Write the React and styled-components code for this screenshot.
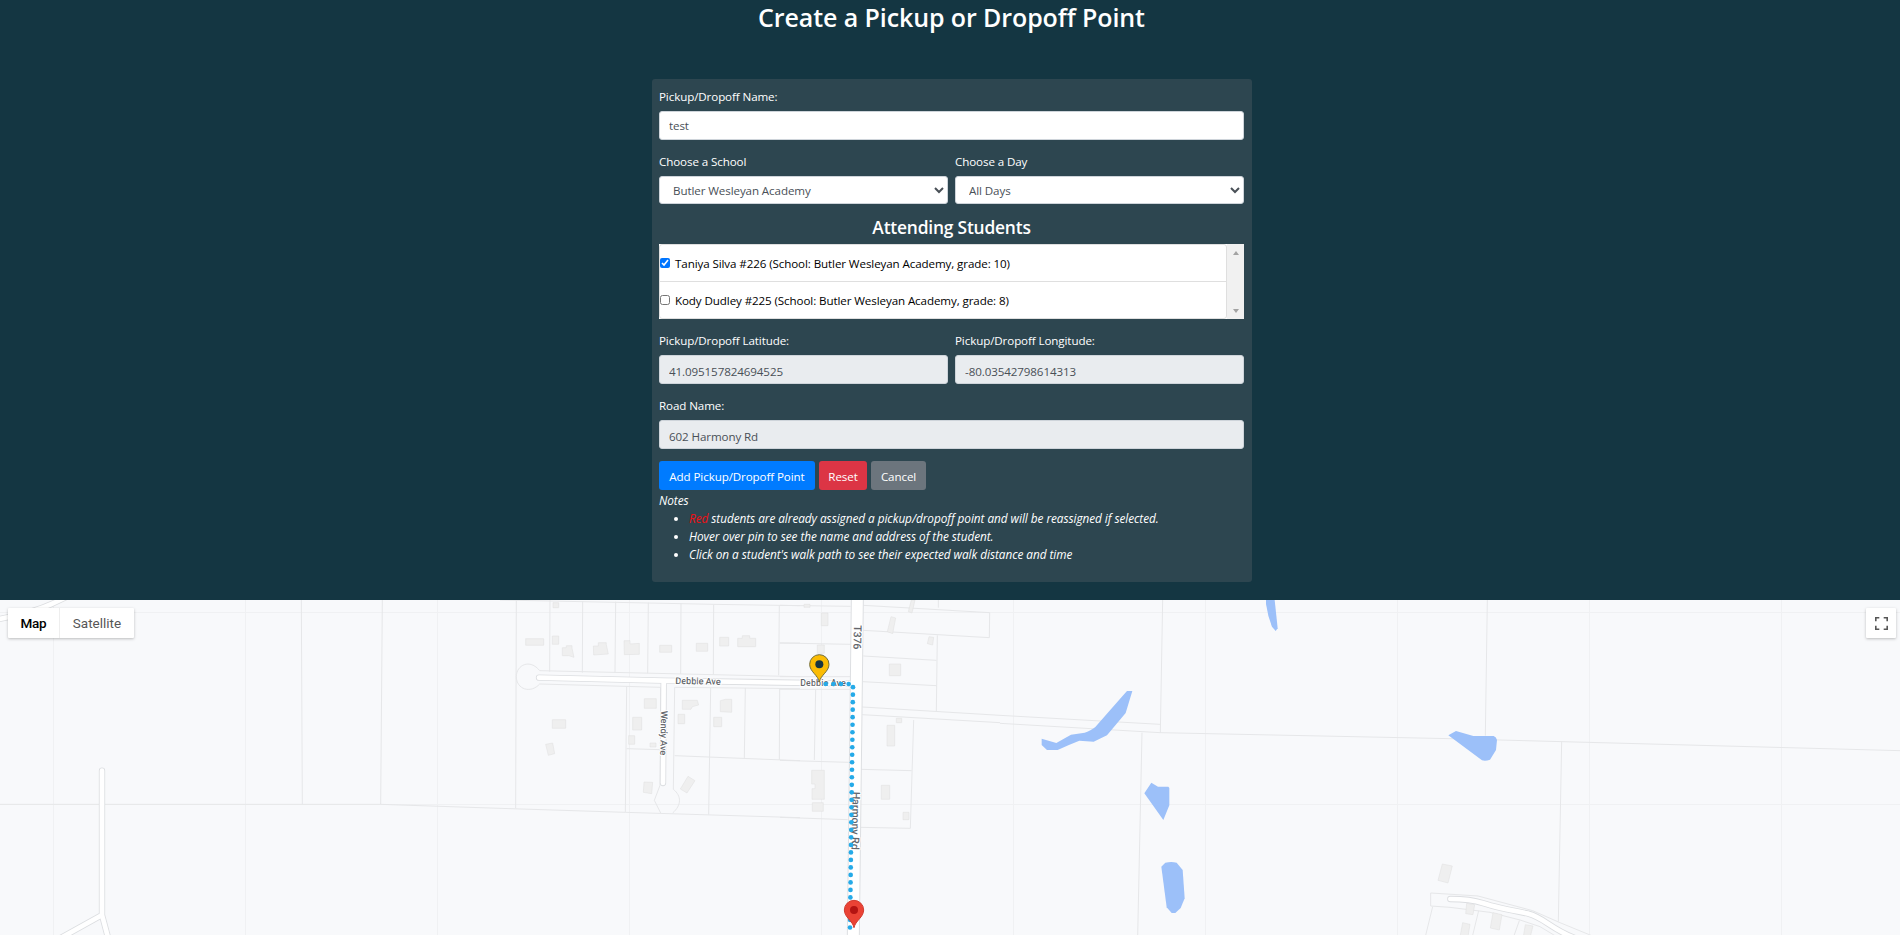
import React from "react";
import styled, { createGlobalStyle, css } from "styled-components";

const GlobalStyle = createGlobalStyle`
  *, *::before, *::after { box-sizing: border-box; }
  html { font-size: 12px; }
  body {
    margin: 0;
    background: #143642;
    color: #fff;
    font-family: "Open Sans", "Noto Sans", sans-serif;
    font-size: 11.6px;
    line-height: 18px;
    letter-spacing: -0.1px;
    overflow: hidden;
  }
`;

const Page = styled.div`
  display: flex;
  flex-direction: column;
  height: 935px;
  overflow: hidden;
`;

const Title = styled.h2`
  margin: 0;
  padding: 3px 0 0 3px;
  height: 79px;
  text-align: center;
  font-size: 25px;
  font-weight: 600;
  line-height: 29px;
  letter-spacing: -0.1px;
`;

const Card = styled.form`
  width: 600px;
  height: 503px;
  margin: 0 0 18px 652px;
  padding: 8px 8px 0 7px;
  border-radius: 3px;
  background: #2d4650;
`;

const Row = styled.div`
  display: grid;
  grid-template-columns: repeat(${(p) => p.$cols || 1}, 1fr);
  column-gap: 7px;
  margin-bottom: 12px;
`;

const Field = styled.label`
  display: flex;
  flex-direction: column;
  gap: 5px;
  padding-top: 1px;
`;

const control = css`
  width: 100%;
  border: 1px solid #ced4da;
  border-radius: 3px;
  background: #fff;
  color: #495057;
  font: inherit;
  letter-spacing: inherit;
  outline: none;
`;

const Input = styled.input`
  ${control}
  height: 29px;
  padding: 4.5px 9px;
  &:read-only { padding: 6px 9px 3px; background: #e9ecef; }
`;

const Select = styled.select`
  ${control}
  height: 28px;
  padding: 4px 9px;
`;

const SubTitle = styled.h4`
  margin: 0 0 6px;
  text-align: center;
  font-size: 17.4px;
  font-weight: 600;
  line-height: 22px;
  letter-spacing: -0.2px;
`;

const ListBox = styled.div`
  display: flex;
  height: 75px;
  margin-bottom: 12px;
  background: #fff;
`;

const StudentList = styled.div`
  flex: 1;
  border: 1px solid #dfdfdf;
  border-radius: 3px;
`;

const Student = styled.label`
  display: flex;
  align-items: center;
  height: 36px;
  padding: 1px 0 0;
  color: #000;
  & + & { height: 37px; border-top: 1px solid #dfdfdf; }
`;

const Check = styled.input`
  width: 10px;
  height: 10px;
  margin: -1px 5px 0 0;
`;

const Track = styled.div`
  display: flex;
  flex-direction: column;
  justify-content: space-between;
  align-items: center;
  width: 17px;
  padding: 7px 0 6px;
  background: #f1f1f1;
`;

const Arrow = styled.span`
  border: 3.5px solid transparent;
  border-top-width: ${(p) => (p.$up ? 0 : 4)}px;
  border-bottom-width: ${(p) => (p.$up ? 4 : 0)}px;
  border-${(p) => (p.$up ? "bottom" : "top")}-color: #a3a3a3;
`;

const Actions = styled.div`
  display: flex;
  gap: 4px;
`;

const Button = styled.button`
  width: ${(p) => p.$width}px;
  height: 29px;
  padding: 2px 0 0;
  border: 0;
  border-radius: 3px;
  background: ${(p) => p.$color};
  color: #fff;
  font: inherit;
  letter-spacing: inherit;
`;

const Notes = styled.div`
  padding-top: 1px;
  font-size: 11.8px;
  font-style: italic;
  letter-spacing: -0.05px;
`;

const NoteList = styled.ul`
  margin: 0;
  padding-left: 30px;
`;

const Red = styled.span`
  color: #f00f14;
`;

const MapArea = styled.div`
  position: relative;
  flex: 0 0 335px;
  background: #f8f9fb;
`;

const MapSvg = styled.svg`
  display: block;
  font-family: Roboto, sans-serif;
  letter-spacing: 0;
`;

const MapTypes = styled.div`
  position: absolute;
  left: 8px;
  top: 8px;
  display: flex;
  height: 30px;
  border-radius: 1px;
  background: #fff;
  box-shadow: 0 1px 3px rgba(0, 0, 0, 0.25);
`;

const MapType = styled.div`
  width: ${(p) => p.$width}px;
  border-left: ${(p) => (p.$active ? 0 : 1)}px solid #eee;
  color: ${(p) => (p.$active ? "#000" : "#565656")};
  font: ${(p) => (p.$active ? 500 : 400)} 13.5px/30px Roboto, sans-serif;
  letter-spacing: ${(p) => (p.$active ? -0.3 : 0)}px;
  text-align: center;
`;

const Fullscreen = styled.div`
  position: absolute;
  right: 4px;
  top: 8px;
  display: grid;
  place-items: center;
  width: 30px;
  height: 30px;
  border-radius: 1px;
  background: #fff;
  box-shadow: 0 1px 3px rgba(0, 0, 0, 0.25);
`;

const Parcel = styled.path`
  fill: none;
  stroke: ${(p) => p.$tone || "#e6e7e9"};
  stroke-width: 1;
  vector-effect: non-scaling-stroke;
`;

const Casing = styled.path`
  fill: none;
  stroke: #dcdee1;
  stroke-width: 19;
  stroke-linecap: round;
  stroke-linejoin: round;
`;

const Street = styled(Casing)`
  stroke: #fff;
  stroke-width: 14;
`;

const Buildings = styled.path`
  fill: #efefef;
  stroke: #dedede;
  stroke-width: 1.5;
`;

const Water = styled.path`
  fill: #9cc0f9;
`;

const StreetName = styled.text`
  fill: #63666b;
  stroke: #fff;
  stroke-width: 6;
  stroke-linejoin: round;
  paint-order: stroke;
  font-size: ${(p) => p.$size || 28}px;
  font-weight: 500;
  text-anchor: middle;
`;

/* Map features are drafted in third-pixel units relative to each sector. */
const Sector = ({ x, children }) => (
  <g transform={`translate(${x} 590) scale(0.333333)`}>{children}</g>
);

const box = (x, y, w, h) => `M${x} ${y}h${w}v${h}h${-w}z`;

const Road = ({ d }) => (
  <>
    <Casing d={d} />
    <Street d={d} />
  </>
);

const Pin = ({ x, y, fill, stroke, dot }) => (
  <g transform={`translate(${x} ${y})`}>
    <path
      d="M0 53C-4 32 -29 22 -29 0A29 29 0 0 1 29 0C29 22 4 32 0 53Z"
      fill={fill}
      stroke={stroke}
      strokeWidth="3"
    />
    <circle r="12" fill={dot} />
  </g>
);

const walkDots = [
  ...[137, 160, 183, 206].map((x) => [x, 282]),
  ...Array.from({ length: 33 }, (_, i) => [219 - i * 0.28, 291.5 + i * 22.53]),
];

function StreetMap() {
  return (
    <MapSvg width="1900" height="335" viewBox="0 600 1900 335">
      <Parcel
        $tone="#f0f1f3"
        d={
          Array.from({ length: 10 }, (_, i) => `M${53.5 + i * 192} 600v335`).join("") +
          "M0 612.5h1900M0 804.5h1900"
        }
      />

      <Sector x={0}>
        <Parcel d="M904 30L907 643M1147 30L1142 643M0 643H1142L1500 655" />
        <Road d="M-20 90Q110 70 200 20" />
        <Road d="M306 542L306 975L180 1045M306 975L326 1050" />
      </Sector>

      <Sector x={500}>
        <Parcel d="M49 30L47 655M150 30L149 245M248 33L247 248M347 35L345 248M445 38L443 250M543 40L542 252M641 43L640 254M838 46L836 256M0 30L641 43L900 47M838 159H900" />
        <Parcel d="M119 242L900 260M119 242C90 205 49 225 49 260C49 298 92 312 119 282L482 292L480 586L463 631L482 669M900 296L524 292L520 598C545 618 545 645 518 669" />
        <Parcel d="M0 655L376 667L900 683M380 290L376 667M380 476L480 479M524 497L900 512M632 294L626 674M736 294L733 504M839 296L838 510" />
        <Buildings
          d={
            box(77, 146, 54, 20) + box(159, 38, 17, 15) + box(157, 138, 19, 25) +
            "M187 173L199 173V167H216V174L222 202L207 197H187Z" +
            "M280 168H295V158H319V164L325 192L281 195Z" +
            "M372 152H390V162L418 160V193L373 194Z" +
            box(479, 166, 36, 21) + box(589, 160, 34, 24) + box(659, 142, 27, 26) +
            "M713 145H727V137H749V145H767V170H713Z" +
            box(433, 326, 36, 29) + box(398, 382, 27, 38) + box(386, 437, 18, 26) +
            box(450, 459, 18, 12) + box(157, 389, 40, 26) +
            "M137 463L158 459L164 491L145 496Z" +
            "M547 331H592L596 345L577 350L573 358H547Z" +
            box(534, 373, 20, 28) + box(641, 382, 24, 28) +
            "M661 332L676 328H695V367L661 365Z" +
            "M432 576L458 577L455 611L430 607ZM564 559L585 572L561 609L541 597Z"
          }
        />
        <Road d="M117 263L491 272L1060 281M491 272L489 579" />
        <StreetName x="594" y="283" transform="rotate(1 594 283)" textLength="136">Debbie Ave</StreetName>
        <StreetName transform="translate(482 429) rotate(91)" textLength="134">Wendy Ave</StreetName>
      </Sector>

      <Sector x={780}>
        <Parcel d="M0 46L212 49M0 159L212 163M0 260H210M0 298H210M0 511L206 517M107 300L103 510M0 682L203 689" />
        <Parcel d="M250 46L629 68L628 143L250 121M475 30V53M472 136L469 363M250 198L469 211M249 275L469 287M247 351L660 376M247 374L660 398M401 390L391 715L241 712M243 538L395 542" />
        <Buildings
          d={
            box(124, 69, 20, 38) + box(112, 165, 21, 25) + box(72, 43, 18, 9) +
            "M333 80L347 84L338 131L322 125ZM394 30H405L396 69L385 65ZM447 140L461 142L458 165L442 161Z" +
            box(328, 222, 34, 35) + box(349, 385, 16, 13) + box(321, 406, 23, 62) +
            "M95 541H133V628H96V596H105V582H95Z" +
            box(97, 638, 33, 26) + box(304, 586, 25, 42) + box(369, 667, 18, 22)
          }
        />
        <path d="M214 20H250L238 1045H202Z" fill="#fff" />
        <Parcel $tone="#dddfe2" d="M214 30L202 1040M250 30L238 1040" />
        <path d="M190 281L222 282" fill="none" stroke="#fff" strokeWidth="14" />
        <StreetName transform="translate(221 142) rotate(91)" $size={32} textLength="72">T376</StreetName>
        <StreetName x="129" y="289" $size={27} textLength="137">Debbie Ave</StreetName>
        <StreetName transform="translate(216 692) rotate(91)" $size={32} textLength="174">Harmony Rd</StreetName>
        {walkDots.map(([cx, cy]) => (
          <circle key={`${cx}-${cy}`} cx={cx} cy={cy} r="7" fill="#25aae8" />
        ))}
        <Pin x={118} y={223} fill="#fbbc04" stroke="#716b35" dot="#173541" />
        <Pin x={222} y={960} fill="#ea4335" stroke="#d0392d" dot="#b31412" />
      </Sector>

      <Sector x={1000}>
        <Parcel d="M0 376L480 403M0 400L480 428L1350 446M488 30L481 428M426 428L413 1040" />
        <Water d="M798 30H824L833 115L827 123L816 110Q803 78 798 42Z" />
        <Water d="M381 303H397L377 369L321 436L281 455L238 452Q202 466 173 480H141L125 465V446L169 459L213 434L254 428Q275 421 286 411L363 323Z" />
        <Water d="M454 578L474 590H505L508 594V646L490 690L433 610Z" />
        <Water d="M484 830L496 818Q514 814 530 818L548 840L554 925L542 954L526 969H515L500 952Z" />
      </Sector>

      <Sector x={1400}>
        <Parcel d="M150 446L1500 482M262 30L256 437M485 454L475 995" />
        <Parcel d="M92 948V909L234 918L398 962L480 998L575 1037M92 948L150 952L270 967L360 990L420 1010L470 1040M98 950L76 1040M236 962L217 1040M358 992L341 1040" />
        <Water d="M145 436L168 423L220 438H281Q289 441 291 450L288 480L270 509Q257 514 246 511Z" />
        <Buildings d="M127 822L157 828L144 879L114 871ZM200 940L224 944L219 974L197 971ZM279 968L306 974L298 1020L271 1014ZM188 998L210 1003L204 1040H180ZM376 1004L399 1008L391 1040H370Z" />
        <Road d="M151 927Q210 927 250 940T385 971C430 982 450 1015 520 1042" />
      </Sector>
    </MapSvg>
  );
}

export default function App() {
  return (
    <Page>
      <GlobalStyle />
      <Title>Create a Pickup or Dropoff Point</Title>
      <Card>
        <Row>
          <Field>
            Pickup/Dropoff Name:
            <Input defaultValue="test" />
          </Field>
        </Row>
        <Row $cols={2}>
          <Field>
            Choose a School
            <Select>
              <option>Butler Wesleyan Academy</option>
            </Select>
          </Field>
          <Field>
            Choose a Day
            <Select>
              <option>All Days</option>
            </Select>
          </Field>
        </Row>
        <SubTitle>Attending Students</SubTitle>
        <ListBox>
          <StudentList>
            <Student>
              <Check type="checkbox" defaultChecked />
              Taniya Silva #226 (School: Butler Wesleyan Academy, grade: 10)
            </Student>
            <Student>
              <Check type="checkbox" />
              Kody Dudley #225 (School: Butler Wesleyan Academy, grade: 8)
            </Student>
          </StudentList>
          <Track>
            <Arrow $up />
            <Arrow />
          </Track>
        </ListBox>
        <Row $cols={2}>
          <Field>
            Pickup/Dropoff Latitude:
            <Input readOnly value="41.095157824694525" />
          </Field>
          <Field>
            Pickup/Dropoff Longitude:
            <Input readOnly value="-80.03542798614313" />
          </Field>
        </Row>
        <Row>
          <Field>
            Road Name:
            <Input readOnly value="602 Harmony Rd" />
          </Field>
        </Row>
        <Actions>
          <Button type="button" $width={156} $color="#007bff">Add Pickup/Dropoff Point</Button>
          <Button type="button" $width={48} $color="#dc3545">Reset</Button>
          <Button type="button" $width={55} $color="#6c757d">Cancel</Button>
        </Actions>
        <Notes>
          Notes
          <NoteList>
            <li><Red>Red</Red> students are already assigned a pickup/dropoff point and will be reassigned if selected.</li>
            <li>Hover over pin to see the name and address of the student.</li>
            <li>Click on a student's walk path to see their expected walk distance and time</li>
          </NoteList>
        </Notes>
      </Card>
      <MapArea>
        <StreetMap />
        <MapTypes>
          <MapType $width={51} $active>Map</MapType>
          <MapType $width={75}>Satellite</MapType>
        </MapTypes>
        <Fullscreen>
          <svg width="13" height="13" viewBox="0 0 13 13" fill="none" stroke="#565656" strokeWidth="1.6">
            <path d="M0.8 4.3V0.8H4.3M8.7 0.8H12.2V4.3M12.2 8.7V12.2H8.7M4.3 12.2H0.8V8.7" />
          </svg>
        </Fullscreen>
      </MapArea>
    </Page>
  );
}
